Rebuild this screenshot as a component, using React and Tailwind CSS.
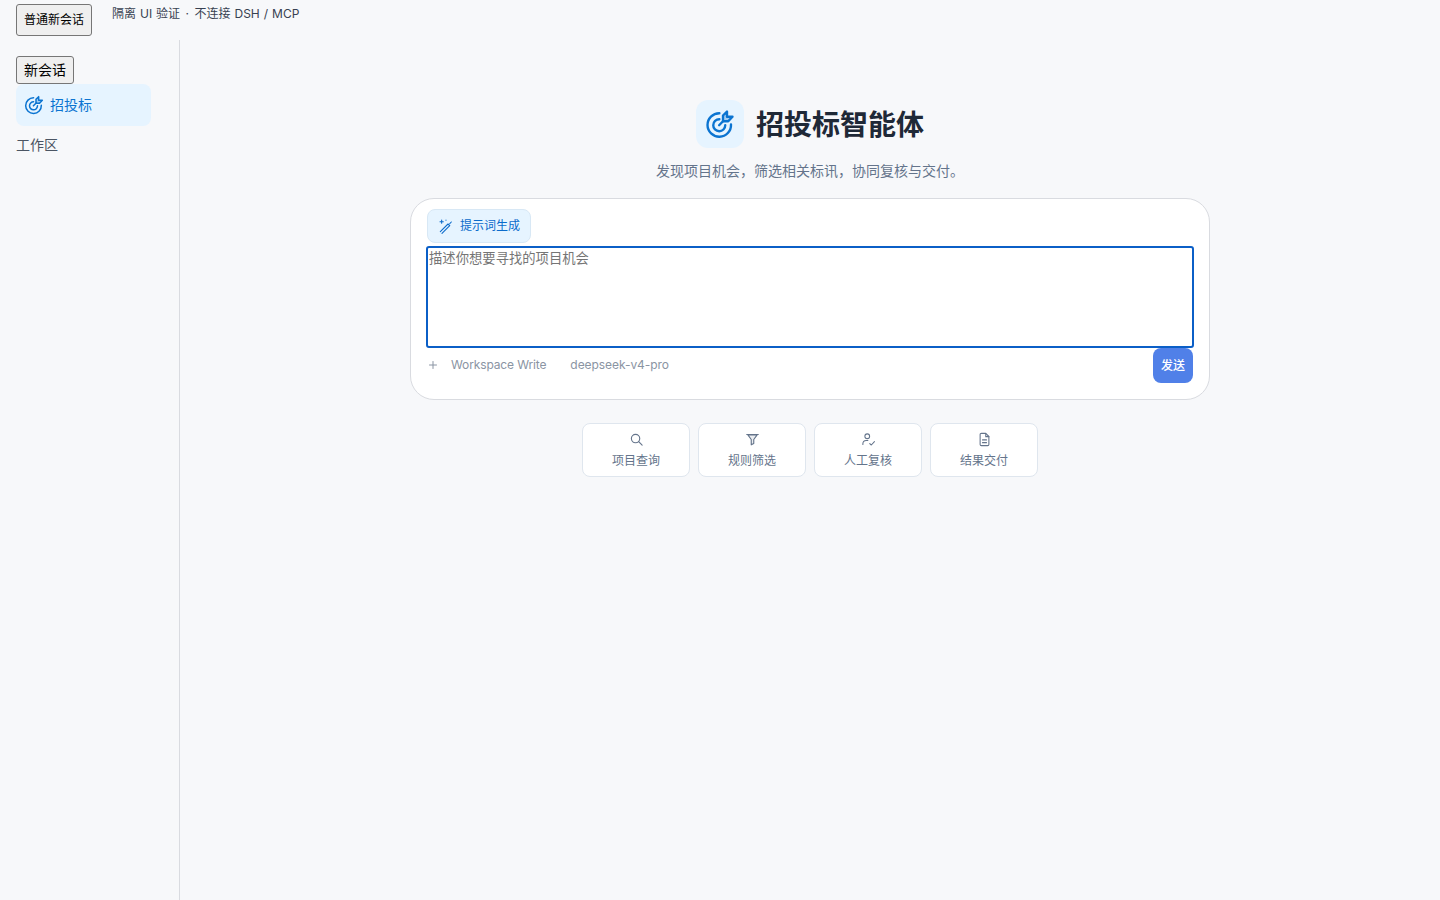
import React from "react";
import { Plus } from "lucide-react";

const font = "font-['Inter','Noto_Sans_CJK_SC',sans-serif]";

function Svg({ size = 24, sw = 2, children }) {
  return (
    <svg width={size} height={size} viewBox="0 0 24 24" fill="none" stroke="currentColor" strokeWidth={sw} strokeLinecap="round" strokeLinejoin="round">
      {children}
    </svg>
  );
}

function TargetIcon({ size, sw }) {
  return (
    <Svg size={size} sw={sw}>
      <path d="M11.5 3.4A9.4 9.4 0 1 0 20.8 12.4" />
      <path d="M11.5 8.2A4.8 4.8 0 1 0 16.2 13" />
      <path d="M11.3 13L14.6 9.6" />
      <path d="M14.4 9.8V5.2L17.6 2V6.2H22L18.6 9.8Z" fill="currentColor" fillOpacity="0.3" />
    </Svg>
  );
}

function WandIcon({ size }) {
  return (
    <Svg size={size} sw={1.6}>
      <path d="M3.5 20.5L15 9l2.6 2.6L6 23" />
      <path d="M17.6 8.5L20 6" />
      <path d="M5.5 3v5M3 5.5h5" />
      <path d="M12 3.2h.01" />
    </Svg>
  );
}

function SearchIcon({ size }) {
  return (
    <Svg size={size} sw={1.8}>
      <circle cx="10.5" cy="10.5" r="6.7" />
      <path d="M15.5 15.5L21 21" />
    </Svg>
  );
}

function FunnelIcon({ size }) {
  return (
    <Svg size={size} sw={1.8}>
      <path d="M2.8 4h18.4" />
      <path d="M4.6 4.5L10 12v8.5l4-2V12l5.4-7.5Z" fill="currentColor" fillOpacity="0.12" />
    </Svg>
  );
}

function ReviewIcon({ size }) {
  return (
    <Svg size={size} sw={1.7}>
      <circle cx="10" cy="6.8" r="3.8" />
      <path d="M3 20v-1.2A5.3 5.3 0 0 1 8.3 13.6H11" />
      <path d="M14 18.5l2.5 2.3L21.5 15.5" />
    </Svg>
  );
}

function DocIcon({ size }) {
  return (
    <Svg size={size} sw={1.7}>
      <path d="M14 2.2H7A2 2 0 0 0 5 4.2v15.6a2 2 0 0 0 2 2h10a2 2 0 0 0 2-2V7.2Z" />
      <path d="M14 2.4v5h5" />
      <path d="M8.8 12.6h6.4M8.8 17h6.4" />
    </Svg>
  );
}

const actions = [
  { label: "项目查询", Icon: SearchIcon },
  { label: "规则筛选", Icon: FunnelIcon },
  { label: "人工复核", Icon: ReviewIcon },
  { label: "结果交付", Icon: DocIcon },
];

function NativeButton({ children, className }) {
  return (
    <button className={`block border border-[#767676] rounded-[3px] bg-[#efefef] text-black ${className}`}>
      {children}
    </button>
  );
}

export default function App() {
  return (
    <div className={`${font} min-h-[900px] bg-[#f7f8fa] text-[#1f2937] flex flex-col`}>
      <header className="h-10 flex items-start pl-4">
        <NativeButton className="mt-1 w-[76px] h-8 text-xs">普通新会话</NativeButton>
        <span className="ml-5 mt-1.5 text-xs leading-4 text-[#374151] [word-spacing:0.6px]">
          隔离 UI 验证 <span className="px-[1.5px]">·</span> 不连接 DSH / MCP
        </span>
      </header>
      <div className="flex flex-1">
        <aside className="w-[180px] border-r border-[#d9dbe0] pl-4 pr-7 pt-4">
          <NativeButton className="w-[58px] h-7 text-sm">新会话</NativeButton>
          <div className="h-[42px] rounded-lg bg-[#e6f4ff] flex items-center gap-1.5 pl-2 text-sm text-[#0b74d1]">
            <TargetIcon size={20} sw={1.8} />
            <span>招投标</span>
          </div>
          <div className="mt-[7px] h-6 flex items-center text-sm text-[#4b5563]">工作区</div>
        </aside>
        <main className="flex-1 flex flex-col items-center pt-[60px]">
          <div className="flex items-center gap-3 h-12">
            <div className="w-12 h-12 rounded-xl bg-[#e6f4ff] flex items-center justify-center text-[#0b74d1]">
              <TargetIcon size={30} sw={1.9} />
            </div>
            <h1 className="pt-0.5 text-[28px] font-bold text-[#1f2937]">招投标智能体</h1>
          </div>
          <p className="mt-3 text-sm leading-[22px] text-[#64748b]">发现项目机会，筛选相关标讯，协同复核与交付。</p>
          <section className="mt-4 w-[800px] h-[202px] bg-white border border-[#d9dbe0] rounded-3xl px-[15px] pt-2.5">
            <button className="ml-px w-[104px] h-[34px] rounded-lg bg-[#e6f4ff] border border-[#d8e8f5] text-xs text-[#0b6bcb] flex items-center justify-center gap-1.5">
              <WandIcon size={16} />
              提示词生成
            </button>
            <div className="mt-[3px] h-[102px] border-2 border-[#0b5fc7] rounded-[3px] px-px pt-0.5 text-[13.333px] leading-[16px] text-[#757575]">
              描述你想要寻找的项目机会
            </div>
            <div className="flex items-start justify-between pr-px">
              <div className="flex items-center h-[34px] pl-px text-xs text-[#8a94a3]">
                <Plus size={12} />
                <span className="ml-3 tracking-[-0.13px]">Workspace Write</span>
                <span className="ml-6 tracking-[-0.06px]">deepseek-v4-pro</span>
              </div>
              <button className="w-10 h-[35px] rounded-lg bg-[#5080e8] text-xs font-medium text-white">发送</button>
            </div>
          </section>
          <div className="mt-[23px] flex gap-2">
            {actions.map(({ label, Icon }) => (
              <button key={label} className="w-[108px] h-[54px] pt-2 bg-white border border-[#dfe6ee] rounded-lg flex flex-col items-center gap-1.5 text-xs text-[#64748b]">
                <Icon size={15} />
                <span className="leading-4">{label}</span>
              </button>
            ))}
          </div>
        </main>
      </div>
    </div>
  );
}
